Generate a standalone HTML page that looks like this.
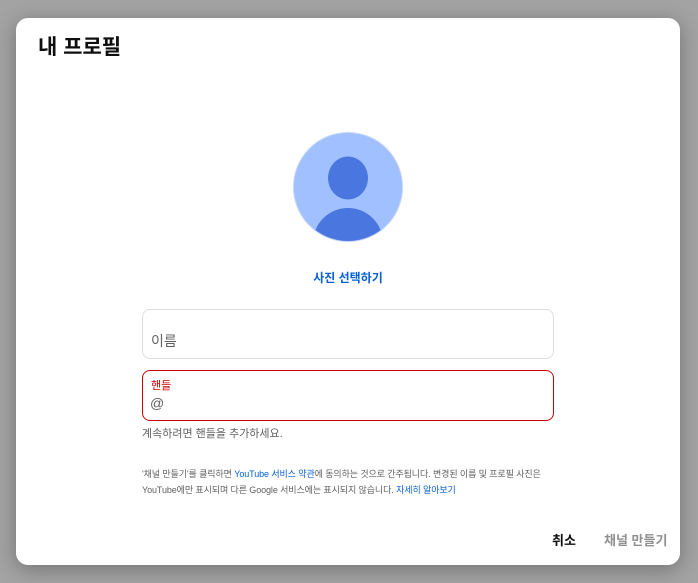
<!DOCTYPE html>
<html><head><meta charset="utf-8"><style>
*{box-sizing:border-box;margin:0;padding:0}
body{width:698px;height:583px;background:#a3a3a3;font-family:"Liberation Sans","Noto Sans CJK KR",sans-serif;position:relative;overflow:hidden}
.d{position:absolute;left:16px;top:18px;width:664px;height:547px;background:#fff;border-radius:12px;box-shadow:0 4px 20px rgba(0,0,0,.3)}
.t{position:absolute;left:22px;top:13px;font-size:21px;font-weight:bold;color:#0f0f0f}
.av{position:absolute;left:277px;top:114px;width:110px;height:110px;border-radius:50%;background:#a0c0ff;overflow:hidden;border:1px solid #c6d6f5}
.sel{position:absolute;left:0;width:664px;top:251px;text-align:center;font-size:12px;font-weight:bold;color:#065fd4}
.f1{position:absolute;left:126px;top:291px;width:412px;height:50px;border:1px solid #ddd;border-radius:8px}
.f1 span{position:absolute;left:8px;top:21px;font-size:14px;color:#606060}
.f2{position:absolute;left:126px;top:352px;width:412px;height:51px;border:1px solid #cc0000;border-radius:8px}
.f2 .l{position:absolute;left:8px;top:6px;font-size:11px;color:#cc0000}
.f2 .a{position:absolute;left:7px;top:24px;font-size:14px;color:#606060}
.h{position:absolute;left:126px;top:407px;font-size:11px;color:#606060}
.n{position:absolute;left:126px;top:448px;width:420px;font-size:9px;line-height:16px;color:#606060;letter-spacing:-0.1px}
.n b{font-weight:normal;color:#065fd4}
.c{position:absolute;top:512px;font-size:13px;font-weight:bold}
</style></head><body>
<div class="d">
<div class="t">내 프로필</div>
<div class="av"><svg width="110" height="110" viewBox="0 0 110 110"><ellipse cx="54" cy="45" rx="20" ry="21.5" fill="#4a76e0"/><ellipse cx="54" cy="110" rx="35" ry="35" fill="#4a76e0"/></svg></div>
<div class="sel">사진 선택하기</div>
<div class="f1"><span>이름</span></div>
<div class="f2"><span class="l">핸들</span><span class="a">@</span></div>
<div class="h">계속하려면 핸들을 추가하세요.</div>
<div class="n">'채널 만들기'를 클릭하면 <b>YouTube 서비스 약관</b>에 동의하는 것으로 간주됩니다. 변경된 이름 및 프로필 사진은 YouTube에만 표시되며 다른 Google 서비스에는 표시되지 않습니다. <b>자세히 알아보기</b></div>
<div class="c" style="left:536px;color:#0f0f0f">취소</div>
<div class="c" style="left:588px;color:#909090">채널 만들기</div>
</div>
</body></html>
